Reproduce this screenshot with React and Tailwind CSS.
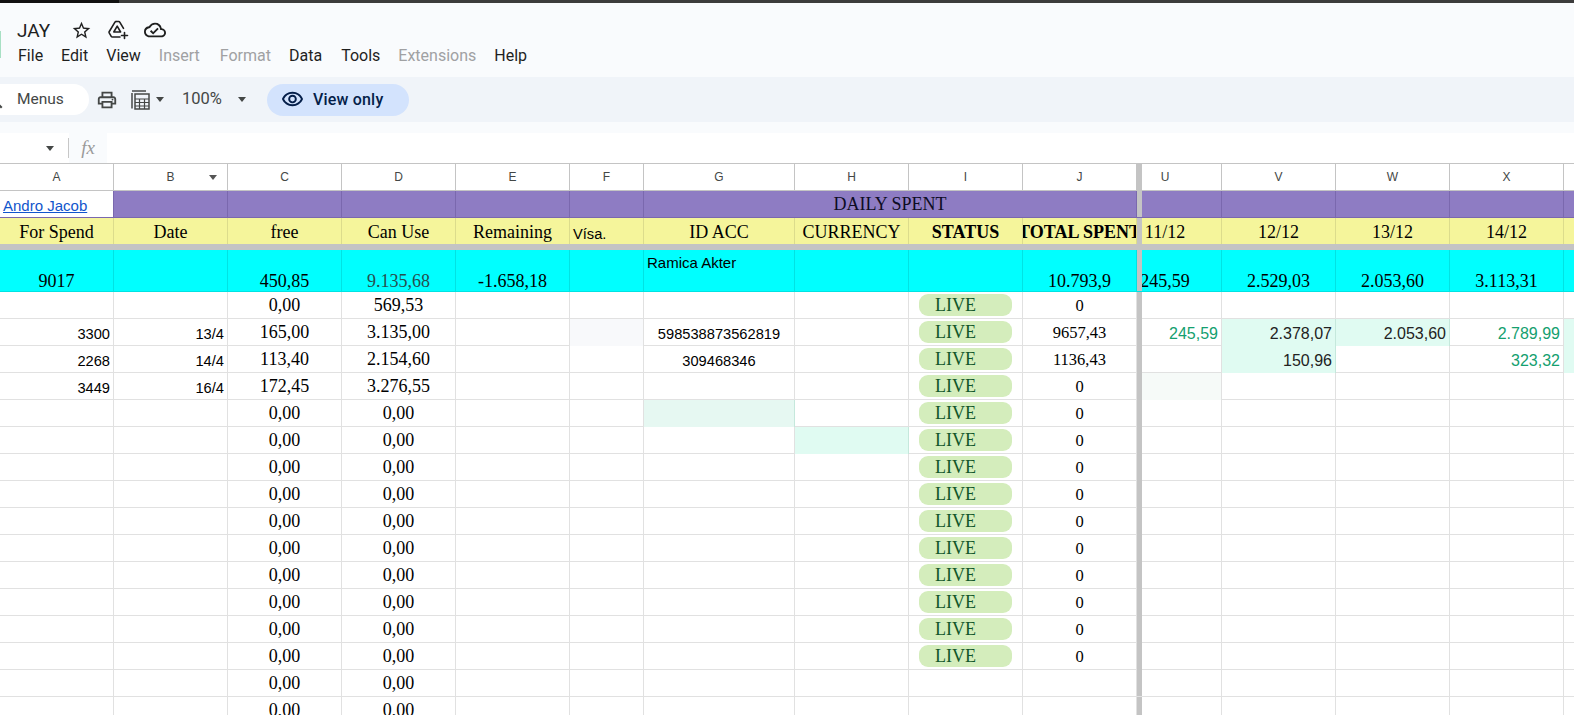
import React from "react";
import {
  MdOutlineStarBorder,
  MdOutlineCloudDone,
  MdOutlinePrint,
  MdOutlineVisibility,
  MdSearch,
} from "react-icons/md";

const gridCols =
  "grid grid-cols-[114px_114px_114px_114px_114px_74px_151px_114px_114px_114px_5px_80px_114px_114px_114px_10px]";
const serif = "font-['Liberation_Serif',serif] text-[18px]";
const sans = "font-['Liberation_Sans',sans-serif] text-[14.67px]";

const columns = ["A", "B", "C", "D", "E", "F", "G", "H", "I", "J"];
const scrolled = ["V", "W", "X"];

const rows = [
  { c: "0,00", d: "569,53", live: true, j: "0" },
  { a: "3300", b: "13/4", c: "165,00", d: "3.135,00", id: "598538873562819", live: true, j: "9657,43", u: "245,59", v: "2.378,07", w: "2.053,60", x: "2.789,99", fTint: true, vTint: true, wTint: true, yTint: true },
  { a: "2268", b: "14/4", c: "113,40", d: "2.154,60", id: "309468346", live: true, j: "1136,43", v: "150,96", x: "323,32", vTint: true, yTint: true },
  { a: "3449", b: "16/4", c: "172,45", d: "3.276,55", live: true, j: "0", uTint: true },
  { c: "0,00", d: "0,00", live: true, j: "0", gTint: true },
  { c: "0,00", d: "0,00", live: true, j: "0", hTint: true },
  ...Array.from({ length: 8 }, () => ({ c: "0,00", d: "0,00", live: true, j: "0" })),
  { c: "0,00", d: "0,00" },
  { c: "0,00", d: "0,00" },
  { c: "0,00", d: "0,00" },
];

function Cell({ align = "center", className = "", children }) {
  const alignClass =
    align === "right" ? "justify-end pr-[3px]" : align === "left" ? "justify-start pl-[3px]" : "justify-center";
  return (
    <div className={`flex items-center overflow-hidden whitespace-nowrap border-r ${alignClass} ${className}`}>
      {children}
    </div>
  );
}

// colonne U : à moitié cachée derrière la barre de gel
function ScrolledU({ className = "", children }) {
  return (
    <div className={`overflow-hidden border-r flex items-center ${className}`}>
      <div className="w-[114px] -ml-[34px] shrink-0 text-center whitespace-nowrap">{children}</div>
    </div>
  );
}

function FreezeBar() {
  return <div className="bg-[#c4c4c4]" />;
}

function CalcIcon() {
  return (
    <svg width="19" height="20" viewBox="0 0 19 20" fill="none" stroke="#444746" strokeWidth="1.5">
      <path d="M1 3v15.5" />
      <path d="M1 1h14" />
      <rect x="4" y="4" width="14" height="15" />
      <path d="M4 9h14M4 12.5h14M4 16h14M8.5 9v10M13.5 9v10" strokeWidth="1.2" />
    </svg>
  );
}

function DriveAddIcon() {
  return (
    <svg width="21" height="20" viewBox="0 0 21 20" fill="none" stroke="#1f1f1f" strokeWidth="1.6" strokeLinejoin="round" strokeLinecap="round">
      <path d="M8 1.5h2.6c.6 0 1 .3 1.3.8l3.6 6" />
      <path d="M8 1.5c-.5 0-.9.3-1.2.8L1.3 11.5c-.3.5-.3 1-.1 1.4l2 3.4c.3.5.7.7 1.2.7h7.6" />
      <path d="M9.2 6.2l3.4 5.8H5.8z" />
      <path d="M16.5 12.5v6M13.5 15.5h6" />
    </svg>
  );
}

function Caret({ className = "" }) {
  return <div className={`w-0 h-0 border-x-[4.5px] border-x-transparent border-t-[5px] border-t-[#444746] ${className}`} />;
}

function TopBar() {
  return (
    <div className="h-[74px] bg-[#f9fbfd] flex font-['Roboto',sans-serif]">
      <div className="w-[1px] h-[27px] mt-[28px] bg-[#a8e0c4] shrink-0" />
      <div className="ml-[16px]">
        <div className="flex items-center h-[38px] pt-[16px]">
          <span className="text-[19px] text-[#1f1f1f] leading-none">JAY</span>
          <MdOutlineStarBorder className="ml-[21px] text-[21px] text-[#1f1f1f]" />
          <div className="ml-[16px]">
            <DriveAddIcon />
          </div>
          <MdOutlineCloudDone className="ml-[15px] text-[22px] text-[#1f1f1f]" />
        </div>
        <div className="flex text-[16px] text-[#1f1f1f] mt-[3px] leading-[24px] ml-[1px]">
          <span>File</span>
          <span className="ml-[18px]">Edit</span>
          <span className="ml-[18px]">View</span>
          <span className="ml-[18px] text-[#a0a1a3]">Insert</span>
          <span className="ml-[20px] text-[#a0a1a3]">Format</span>
          <span className="ml-[18px]">Data</span>
          <span className="ml-[19px]">Tools</span>
          <span className="ml-[18px] text-[#a0a1a3]">Extensions</span>
          <span className="ml-[18px]">Help</span>
        </div>
      </div>
    </div>
  );
}

function Toolbar() {
  return (
    <div className="h-[45px] bg-[#f0f4f9] flex items-center font-['Roboto',sans-serif] text-[#444746] overflow-hidden">
      <div className="w-[109px] -ml-[20px] h-[31px] bg-white rounded-full flex items-center shrink-0">
        <MdSearch className="text-[24px] ml-[2px] shrink-0 text-[#444746]" />
        <span className="ml-[11px] text-[15.5px]">Menus</span>
      </div>
      <MdOutlinePrint className="ml-[7px] text-[22px]" />
      <div className="ml-[13px]">
        <CalcIcon />
      </div>
      <Caret className="ml-[6px]" />
      <span className="ml-[18px] text-[16.5px]">100%</span>
      <Caret className="ml-[16px]" />
      <div className="ml-[21px] w-[142px] h-[32px] rounded-full bg-[#d3e3fd] flex items-center text-[#041e49]">
        <MdOutlineVisibility className="ml-[14px] text-[23px]" />
        <span className="ml-[9px] text-[16px] font-medium tracking-[0.2px]">View only</span>
      </div>
    </div>
  );
}

function FormulaBar() {
  return (
    <div className="h-[30px] bg-white flex items-stretch">
      <div className="w-[68px] flex items-center justify-end pr-[14px] shrink-0">
        <Caret className="border-t-[#333333]" />
      </div>
      <div className="w-[1px] h-[20px] my-auto bg-[#c7c7c7]" />
      <div className="w-[38px] bg-[#f9fbfd] flex items-center justify-center font-['Liberation_Serif',serif] italic text-[19px] text-[#9a9a9a]">
        fx
      </div>
    </div>
  );
}

function ColumnHeaders() {
  const headerCell = "border-[#c4c4c4]";
  return (
    <div className={`${gridCols} h-[28px] bg-white border-y border-[#c4c4c4] font-['Liberation_Sans',sans-serif] text-[12px] text-[#444746]`}>
      {columns.map((c) => (
        <Cell key={c} className={`${headerCell} relative`}>
          {c}
          {c === "B" && <Caret className="absolute right-[10px] top-[11px] border-t-[#555555]" />}
        </Cell>
      ))}
      <FreezeBar />
      <ScrolledU className={headerCell}>U</ScrolledU>
      {scrolled.map((c) => (
        <Cell key={c} className={headerCell}>
          {c}
        </Cell>
      ))}
      <div />
    </div>
  );
}

function TitleRow() {
  const purple = "bg-[#8e7cc3] border-[#7a68ae]";
  return (
    <div className={`${gridCols} h-[27px] border-b border-[#7a68ae] ${serif} text-black`}>
      <Cell align="left" className="font-['Liberation_Sans',sans-serif] text-[15px] bg-white border-[#7a68ae] pt-[5px]">
        <span className="text-[#1155cc] underline">Andro Jacob</span>
      </Cell>
      <Cell className={purple} />
      <Cell className={purple} />
      <Cell className={purple} />
      <Cell className={purple} />
      <Cell className={purple} />
      <Cell className={`${purple} col-span-4 text-[#0e0c24]`}>DAILY SPENT</Cell>
      <FreezeBar />
      <Cell className={purple} />
      <Cell className={purple} />
      <Cell className={purple} />
      <Cell className={purple} />
      <div className="bg-[#8e7cc3]" />
    </div>
  );
}

function LabelRow() {
  const yellow = "bg-[#f5f59b] border-[#dcdc8c] pt-[2px]";
  const labels = ["For Spend", "Date", "free", "Can Use", "Remaining"];
  return (
    <div className={`${gridCols} h-[26px] ${serif} text-black`}>
      {labels.map((l) => (
        <Cell key={l} className={yellow}>
          {l}
        </Cell>
      ))}
      <Cell align="left" className={`bg-[#f5f59b] border-[#dcdc8c] pt-[5px] ${sans}`}>
        Vísa.
      </Cell>
      <Cell className={yellow}>ID ACC</Cell>
      <Cell className={yellow}>CURRENCY</Cell>
      <Cell className={`${yellow} font-bold`}>STATUS</Cell>
      <Cell className={`${yellow} font-bold`}>TOTAL SPENT</Cell>
      <FreezeBar />
      <ScrolledU className={yellow}>11/12</ScrolledU>
      <Cell className={yellow}>12/12</Cell>
      <Cell className={yellow}>13/12</Cell>
      <Cell className={yellow}>14/12</Cell>
      <div className="bg-[#f5f59b]" />
    </div>
  );
}

function TotalRow() {
  const cyan = "bg-[#00ffff] border-[#00e3e3] items-end leading-[20px]";
  return (
    <div className={`${gridCols} h-[42px] border-b border-[#00e3e3] ${serif} text-black`}>
      <Cell className={cyan}>9017</Cell>
      <Cell className={cyan} />
      <Cell className={cyan}>450,85</Cell>
      <Cell className={`${cyan} text-[#274e4e]`}>9.135,68</Cell>
      <Cell className={cyan}>-1.658,18</Cell>
      <Cell className={cyan} />
      <div className="bg-[#00ffff] border-r border-[#00e3e3] pl-[3px] pt-[2px] font-['Liberation_Sans',sans-serif] text-[15px]">Ramica Akter</div>
      <Cell className={cyan} />
      <Cell className={cyan} />
      <Cell className={cyan}>10.793,9</Cell>
      <FreezeBar />
      <div className="bg-[#00ffff] border-r border-[#00e3e3] overflow-hidden flex items-end leading-[20px]">
        <div className="w-[114px] -ml-[34px] shrink-0 text-center">245,59</div>
      </div>
      <Cell className={cyan}>2.529,03</Cell>
      <Cell className={cyan}>2.053,60</Cell>
      <Cell className={cyan}>3.113,31</Cell>
      <div className="bg-[#00ffff]" />
    </div>
  );
}

function DataRow({ row }) {
  const line = "border-[#e1e1e1]";
  const mint = "bg-[#e0fbf2] border-[#c5e8dc]";
  const green = "text-[#14a06f]";
  const amount = "font-['Liberation_Sans',sans-serif] text-[16px] pt-[4px]";
  return (
    <div className={`${gridCols} h-[27px] border-b border-[#e1e1e1] ${serif} text-black`}>
      <Cell align="right" className={`${line} ${sans} pt-[3px]`}>{row.a}</Cell>
      <Cell align="right" className={`${line} ${sans} pt-[3px]`}>{row.b}</Cell>
      <Cell className={line}>{row.c}</Cell>
      <Cell className={line}>{row.d}</Cell>
      <Cell className={line} />
      <Cell className={`${line} ${row.fTint ? "bg-[#f8f9fb]" : ""}`} />
      <Cell className={`${row.gTint ? "bg-[#e6f8f2] border-[#c5e8dc]" : line} ${sans} pt-[3px]`}>{row.id}</Cell>
      <Cell className={row.hTint ? mint : line} />
      <Cell className={line}>
        {row.live && (
          <div className="w-[93px] h-[22px] rounded-[9px] bg-[#d4edbc] text-[#11562a] pl-[16px] flex items-center">
            LIVE
          </div>
        )}
      </Cell>
      <div className={`flex items-center justify-center border-r ${line} font-['Liberation_Serif',serif] text-[16.5px] pt-[2px]`}>{row.j}</div>
      <FreezeBar />
      <Cell align="right" className={`${row.uTint ? "bg-[#f6faf8]" : ""} ${line} ${amount} ${green}`}>{row.u}</Cell>
      <Cell align="right" className={`${row.vTint ? mint : line} ${amount} text-[#222222]`}>{row.v}</Cell>
      <Cell align="right" className={`${row.wTint ? mint : line} ${amount} text-[#222222]`}>{row.w}</Cell>
      <Cell align="right" className={`${line} ${amount} ${green}`}>{row.x}</Cell>
      <div className={row.yTint ? "bg-[#e0fbf2]" : ""} />
    </div>
  );
}

export default function App() {
  return (
    <div className="w-[1574px] h-[715px] overflow-hidden bg-white">
      <div className="h-[3px] bg-[#3c3c3c]">
        <div className="w-[119px] h-full bg-[#111111]" />
      </div>
      <TopBar />
      <Toolbar />
      <div className="h-[11px] bg-[#f9fbfd]" />
      <FormulaBar />
      <ColumnHeaders />
      <TitleRow />
      <LabelRow />
      <div className="h-[6px] bg-[#c4c4c4]" />
      <TotalRow />
      {rows.map((row, i) => (
        <DataRow key={i} row={row} />
      ))}
    </div>
  );
}
